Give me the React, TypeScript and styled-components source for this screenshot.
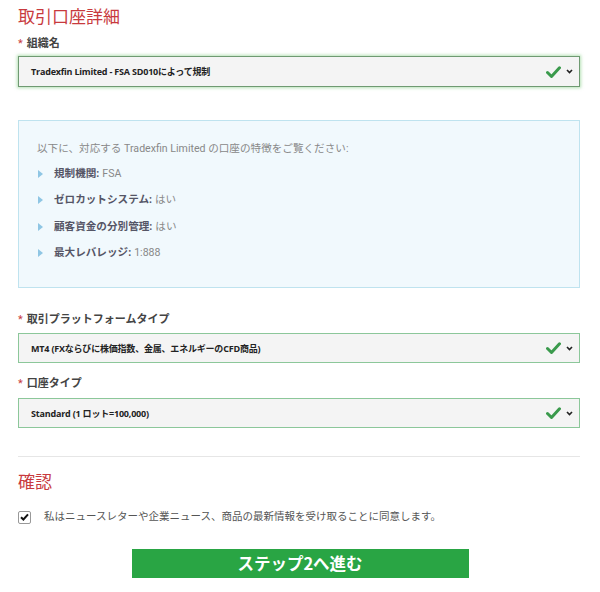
import React from "react";
import styled, { createGlobalStyle } from "styled-components";

const Global = createGlobalStyle`
  body {
    margin: 0;
    background: #fff;
    font-family: Roboto, "Noto Sans CJK JP", sans-serif;
  }
`;

const Page = styled.div`
  width: 600px;
  padding: 6px 20px 0 18px;
  box-sizing: border-box;
`;

const Heading = styled.h2<{ $top?: number }>`
  margin: ${(p) => p.$top ?? 0}px 0 0;
  font-size: 17px;
  line-height: 22px;
  font-weight: 400;
  color: #c83a3e;
`;

const Label = styled.div<{ $top: number }>`
  margin-top: ${(p) => p.$top}px;
  font-size: 11px;
  line-height: 16px;
  font-weight: 700;
  color: #444;
  &::before {
    content: "*";
    color: #c83a3e;
    font-weight: 400;
    margin-right: 4px;
  }
`;

const SelectBox = styled.div<{ $focus?: boolean; $gap: number }>`
  margin-top: ${(p) => p.$gap}px;
  height: ${(p) => (p.$focus ? 31 : 30)}px;
  box-sizing: border-box;
  display: flex;
  align-items: center;
  padding: 0 6px 0 12px;
  background: #f4f4f4;
  border: 1px solid ${(p) => (p.$focus ? "#6f9a72" : "#8cc79a")};
  box-shadow: ${(p) => (p.$focus ? "0 0 3px 1px rgba(120, 200, 120, 0.55)" : "none")};
  font-size: 9px;
  font-weight: 700;
  color: #222;
  font-family: "Open Sans", "Noto Sans CJK JP", sans-serif;
  letter-spacing: -0.2px;
`;

const SelectText = styled.span`
  flex: 1;
`;

const Icons = styled.span`
  display: flex;
  align-items: center;
  gap: 5px;
`;

const InfoBox = styled.div`
  margin-top: 33px;
  height: 168px;
  box-sizing: border-box;
  padding: 20px 18px 0 18px;
  background: #f1f9fd;
  border: 1px solid #bfe3ef;
  color: #888;
  font-size: 10.6px;
`;

const Intro = styled.div`
  line-height: 16px;
`;

const List = styled.ul`
  list-style: none;
  margin: 9px 0 0;
  padding: 0;
  display: flex;
  flex-direction: column;
  gap: 10.4px;
`;

const Item = styled.li`
  display: flex;
  align-items: center;
  line-height: 16px;
  &::before {
    content: "";
    width: 0;
    height: 0;
    border-left: 5px solid #8fc6e4;
    border-top: 4.5px solid transparent;
    border-bottom: 4.5px solid transparent;
    margin: 0 11px 0 1px;
  }
  b {
    color: #556;
    font-weight: 700;
    margin-right: 3px;
  }
`;

const Rule = styled.hr`
  margin: 28px 0 0;
  border: 0;
  border-top: 1px solid #e6e6e6;
`;

const CheckRow = styled.label`
  margin-top: 16px;
  display: flex;
  align-items: center;
  gap: 13px;
  font-size: 10.5px;
  color: #555;
  line-height: 16px;
`;

const Box = styled.span`
  width: 13px;
  height: 13px;
  box-sizing: border-box;
  border: 1px solid #999;
  border-radius: 2px;
  background: #fff;
  display: flex;
  align-items: center;
  justify-content: center;
`;

const Submit = styled.button`
  display: block;
  margin: 24px auto 0;
  width: 337px;
  height: 29px;
  border: 0;
  background: #29a544;
  color: #fff;
  font-family: "Noto Sans CJK JP", sans-serif;
  font-weight: 700;
  font-size: 16.5px;
  line-height: 29px;
  padding: 0;
  position: relative;
  left: 1px;
`;

const Check = () => (
  <svg width="15" height="12" viewBox="0 0 15 12">
    <path d="M1.5 6.5 L5.5 10.5 L13.5 1.8" fill="none" stroke="#3a9a4c" strokeWidth="3" strokeLinecap="round" strokeLinejoin="round" />
  </svg>
);

const Chevron = () => (
  <svg width="7" height="5" viewBox="0 0 7 5">
    <path d="M1 1 L3.5 3.6 L6 1" fill="none" stroke="#222" strokeWidth="1.6" />
  </svg>
);

const Select = ({ text, focus, gap = 6 }: { text: string; focus?: boolean; gap?: number }) => (
  <SelectBox $focus={focus} $gap={gap}>
    <SelectText>{text}</SelectText>
    <Icons>
      <Check />
      <Chevron />
    </Icons>
  </SelectBox>
);

export default function App() {
  return (
    <Page>
      <Global />
      <Heading>取引口座詳細</Heading>
      <Label $top={8}>組織名</Label>
      <Select focus gap={4} text="Tradexfin Limited - FSA SD010によって規制" />

      <InfoBox>
        <Intro>以下に、対応する Tradexfin Limited の口座の特徴をご覧ください:</Intro>
        <List>
          <Item><b>規制機関:</b>FSA</Item>
          <Item><b>ゼロカットシステム:</b>はい</Item>
          <Item><b>顧客資金の分別管理:</b>はい</Item>
          <Item><b>最大レバレッジ:</b>1:888</Item>
        </List>
      </InfoBox>

      <Label $top={24}>取引プラットフォームタイプ</Label>
      <Select gap={5} text="MT4 (FXならびに株価指数、金属、エネルギーのCFD商品)" />
      <Label $top={13}>口座タイプ</Label>
      <Select text="Standard (1 ロット=100,000)" />

      <Rule />
      <Heading $top={14}>確認</Heading>
      <CheckRow>
        <Box>
          <svg width="9" height="8" viewBox="0 0 9 8">
            <path d="M1 4.2 L3.4 6.5 L8 1.3" fill="none" stroke="#111" strokeWidth="2" />
          </svg>
        </Box>
        私はニュースレターや企業ニュース、商品の最新情報を受け取ることに同意します。
      </CheckRow>
      <Submit>ステップ2へ進む</Submit>
    </Page>
  );
}
